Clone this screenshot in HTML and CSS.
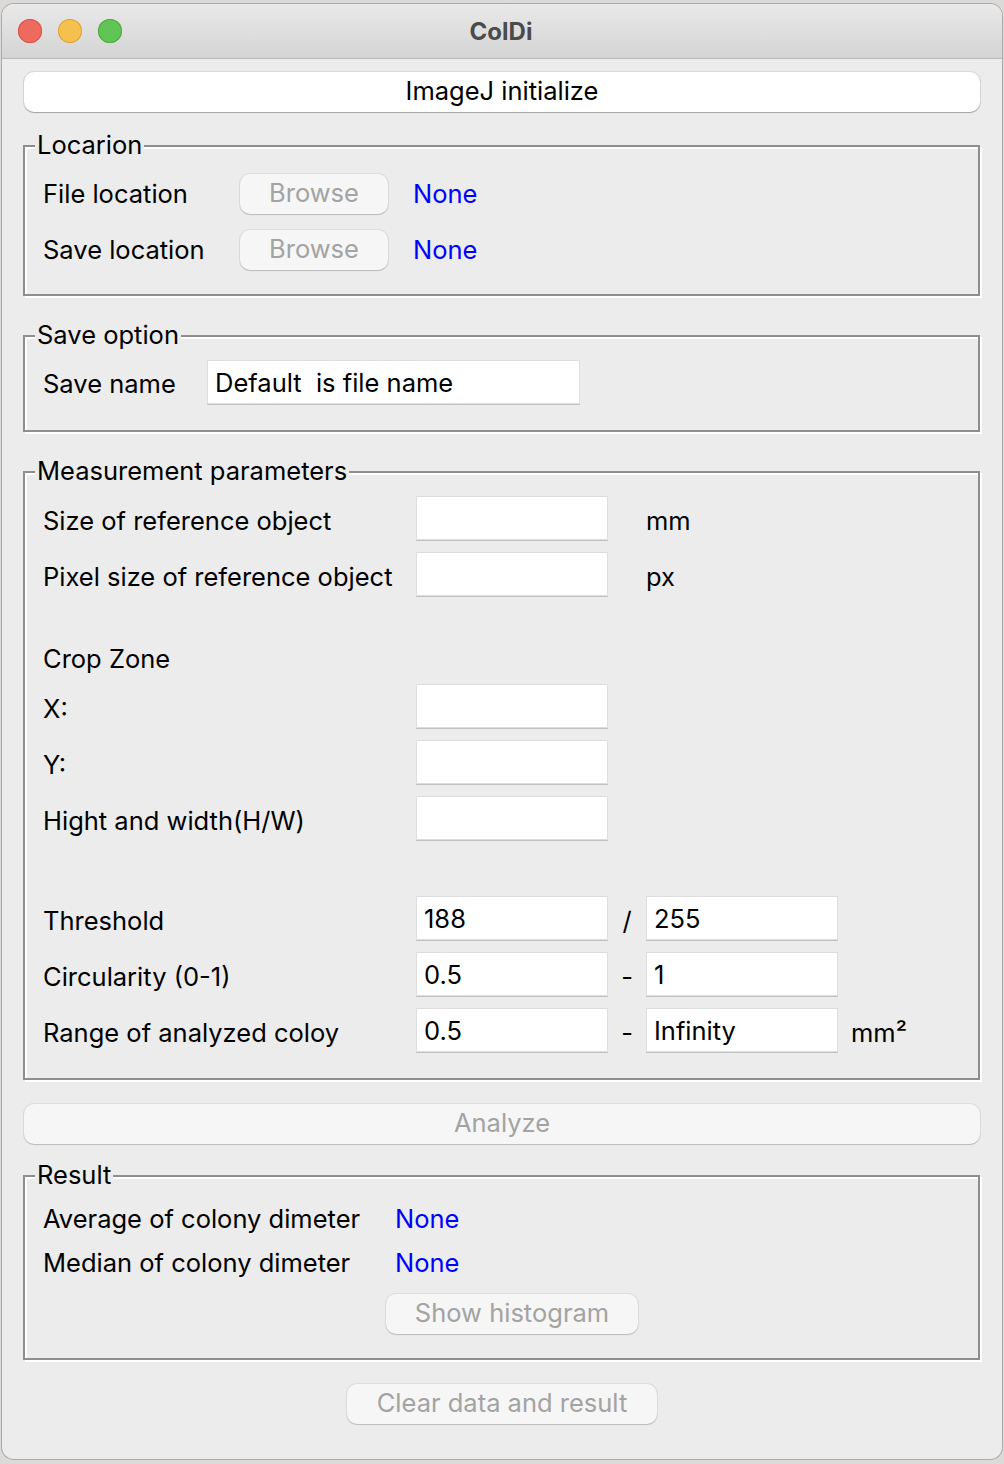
FILE: index.html
```html
<!DOCTYPE html>
<html lang="en">
<head>
<meta charset="utf-8">
<title>ColDi</title>
<link rel="stylesheet" href="styles.css">
</head>
<body>
<div class="window">
  <div class="titlebar">
    <div class="lights">
      <span class="light red"></span>
      <span class="light yellow"></span>
      <span class="light green"></span>
    </div>
    <div class="title">ColDi</div>
    <div></div>
  </div>
  <div class="content">
    <button class="btn btn-active btn-wide btn-init">ImageJ initialize</button>

    <section class="group g-location">
      <span class="legend">Locarion</span>
      <div class="loc-row">
        <span class="label">File location</span>
        <button class="btn btn-disabled browse">Browse</button>
        <span class="link">None</span>
      </div>
      <div class="loc-row">
        <span class="label">Save location</span>
        <button class="btn btn-disabled browse">Browse</button>
        <span class="link">None</span>
      </div>
    </section>

    <section class="group g-save">
      <span class="legend">Save option</span>
      <div class="save-row">
        <span class="label">Save name</span>
        <div class="field field-name">Default&nbsp; is file name</div>
      </div>
    </section>

    <section class="group g-measure">
      <span class="legend">Measurement parameters</span>
      <div class="m-row">
        <span class="label">Size of reference object</span>
        <div class="field c1"></div>
        <span class="unit c3">mm</span>
      </div>
      <div class="m-row">
        <span class="label">Pixel size of reference object</span>
        <div class="field c1"></div>
        <span class="unit c3">px</span>
      </div>
      <div class="m-row crop-title">
        <span class="label">Crop Zone</span>
      </div>
      <div class="m-row crop-first">
        <span class="label">X:</span>
        <div class="field c1"></div>
      </div>
      <div class="m-row">
        <span class="label">Y:</span>
        <div class="field c1"></div>
      </div>
      <div class="m-row">
        <span class="label">Hight and width(H/W)</span>
        <div class="field c1"></div>
      </div>
      <div class="m-row thresh">
        <span class="label">Threshold</span>
        <div class="field c1">188</div>
        <span class="sep">/</span>
        <div class="field c3">255</div>
      </div>
      <div class="m-row">
        <span class="label">Circularity (0-1)</span>
        <div class="field c1">0.5</div>
        <span class="sep">-</span>
        <div class="field c3">1</div>
      </div>
      <div class="m-row">
        <span class="label">Range of analyzed coloy</span>
        <div class="field c1">0.5</div>
        <span class="sep">-</span>
        <div class="field c3">Infinity</div>
        <span class="unit c4">mm²</span>
      </div>
    </section>

    <button class="btn btn-disabled btn-wide btn-analyze">Analyze</button>

    <section class="group g-result">
      <span class="legend">Result</span>
      <div class="r-row">
        <span class="label">Average of colony dimeter</span>
        <span class="link">None</span>
      </div>
      <div class="r-row">
        <span class="label">Median of colony dimeter</span>
        <span class="link">None</span>
      </div>
      <button class="btn btn-disabled btn-hist">Show histogram</button>
    </section>

    <button class="btn btn-disabled btn-clear">Clear data and result</button>
  </div>
</div>
</body>
</html>
```

FILE: styles.css
```css
* {
  box-sizing: border-box;
}

html, body {
  margin: 0;
  padding: 0;
}

body {
  background: #dcd9d9;
  width: 1004px;
  height: 1464px;
  overflow: hidden;
  font-family: "Inter", "Liberation Sans", sans-serif;
  font-size: 25.5px;
  color: #000;
}

.window {
  margin: 4px 0 0 2px;
  width: 1000px;
  height: 1455px;
  background: #ececec;
  border-radius: 12px;
  overflow: hidden;
  box-shadow: 0 0 0 1px rgba(0, 0, 0, 0.22);
  display: flex;
  flex-direction: column;
}

/* ---------- title bar ---------- */
.titlebar {
  height: 55px;
  flex: none;
  display: grid;
  grid-template-columns: 1fr auto 1fr;
  align-items: center;
  background: linear-gradient(#e9e9e9, #d4d4d4);
  border-bottom: 1px solid #b9b9b9;
}

.lights {
  display: flex;
  gap: 16px;
  padding-left: 16px;
}

.light {
  width: 24px;
  height: 24px;
  border-radius: 50%;
  display: block;
}

.red {
  background: #ee6a5f;
  box-shadow: inset 0 0 0 1px #d5544a;
}

.yellow {
  background: #f6c04f;
  box-shadow: inset 0 0 0 1px #dca43a;
}

.green {
  background: #61c555;
  box-shadow: inset 0 0 0 1px #4ca83f;
}

.title {
  font-weight: 700;
  font-size: 24px;
  color: #4b4b4b;
  text-align: center;
  padding-right: 2px;
}

/* ---------- content ---------- */
.content {
  padding: 13px 22px 0 22px;
  display: flex;
  flex-direction: column;
  align-items: flex-start;
}

.btn {
  font-family: inherit;
  font-size: 25.5px;
  height: 40px;
  border: none;
  border-radius: 10px;
  padding: 0 0 3px 0;
  margin: 0;
  display: flex;
  align-items: center;
  justify-content: center;
}

.btn-active {
  background: #ffffff;
  color: #000;
  box-shadow: 0 0 0 1px rgba(0, 0, 0, 0.08), 0 1px 1px rgba(0, 0, 0, 0.25);
}

.btn-disabled {
  background: #f6f6f6;
  color: #a3a3a3;
  box-shadow: 0 0 0 1px rgba(0, 0, 0, 0.06), 0 1px 1px rgba(0, 0, 0, 0.16);
}

.btn-wide {
  width: 956px;
}

/* ---------- groups ---------- */
.group {
  position: relative;
  width: 957px;
  margin-left: -1px;
  border: 2px solid #8e8e8e;
  box-shadow: 2px 2px 0 #ffffff, inset 2px 2px 0 #ffffff;
  padding-left: 18px;
}

.legend {
  position: absolute;
  top: -17px;
  left: 10px;
  padding: 0 2px;
  line-height: 30px;
  background: #ececec;
}

.label {
  white-space: nowrap;
}

.link {
  color: #0000ff;
}

/* Location */
.g-location {
  margin-top: 33px;
  height: 151px;
  padding-top: 27px;
  display: flex;
  flex-direction: column;
  gap: 16px;
}

.loc-row {
  display: grid;
  grid-template-columns: 197px 148px auto;
  align-items: center;
  height: 40px;
}

.loc-row .label {
  padding-bottom: 2px;
}

.loc-row .link {
  margin-left: 25px;
  padding-bottom: 2px;
}

.browse {
  width: 148px;
}

/* Save option */
.g-save {
  margin-top: 39px;
  height: 97px;
  padding-top: 23px;
}

.save-row {
  display: grid;
  grid-template-columns: 164px 373px;
  align-items: center;
  height: 44px;
}

.save-row .label {
  padding-top: 2px;
}

.field {
  height: 44px;
  background: #ffffff;
  border: 1px solid #dedede;
  box-shadow: 0 1px 0 #c2c2c2;
  padding: 0 7px;
  display: flex;
  align-items: center;
  white-space: nowrap;
}

/* Measurement */
.g-measure {
  margin-top: 39px;
  height: 609px;
  padding-top: 23px;
  display: flex;
  flex-direction: column;
  gap: 12px;
}

.m-row {
  display: grid;
  grid-template-columns: 373px 192px 38px 192px 13px auto;
  align-items: center;
  height: 44px;
}

.m-row .label {
  grid-column: 1;
  padding-top: 5px;
}

.m-row .c1 {
  grid-column: 2;
}

.m-row .sep {
  grid-column: 3;
  text-align: center;
  padding-top: 4px;
}

.m-row .c3 {
  grid-column: 4;
}

.m-row .c4 {
  grid-column: 6;
}

.unit {
  padding-top: 5px;
}

.crop-title {
  margin-top: 26px;
}

.crop-first {
  margin-top: -6px;
}

.thresh {
  margin-top: 44px;
}

/* Analyze */
.btn-analyze {
  margin-top: 24px;
}

/* Result */
.g-result {
  margin-top: 31px;
  height: 185px;
  padding-top: 22px;
  display: flex;
  flex-direction: column;
  gap: 4px;
}

.r-row {
  display: grid;
  grid-template-columns: 352px auto;
  align-items: center;
  height: 40px;
}

.r-row .label,
.r-row .link {
  padding-bottom: 2px;
}

.btn-hist {
  width: 252px;
  margin-left: 343px;
  margin-top: 7px;
}

/* Clear */
.btn-clear {
  margin-top: 24px;
  width: 310px;
  align-self: center;
}
```
